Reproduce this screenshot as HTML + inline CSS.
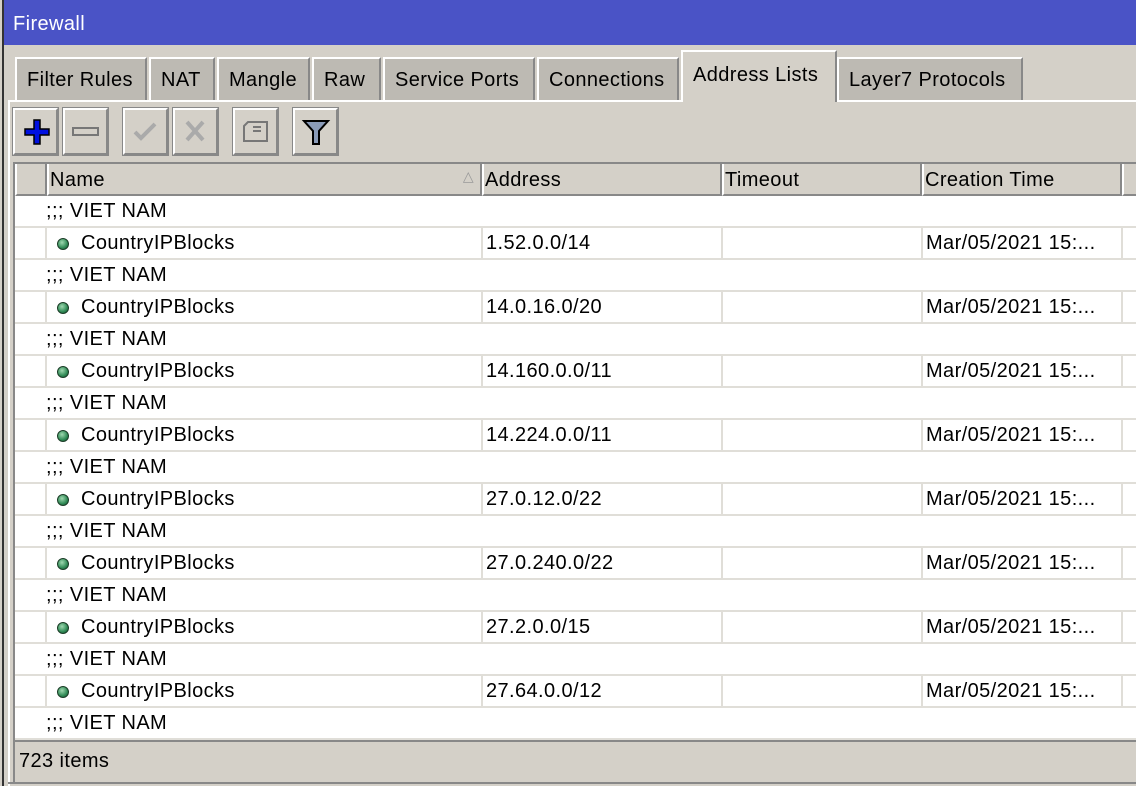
<!DOCTYPE html>
<html><head><style>
*{margin:0;padding:0;box-sizing:border-box}
body{width:1136px;height:786px;overflow:hidden;background:#d4d0c8;font-family:"Liberation Sans","DejaVu Sans",sans-serif;font-size:20px;color:#000;position:relative;letter-spacing:0.4px}
.abs{position:absolute}
.title{left:4px;top:0;width:1132px;height:45px;background:#4a53c6;color:#fff;padding:13px 0 0 9px;font-size:20px}
.lb{left:0;top:0;width:4px;height:786px;background:#d4d0c8;border-right:2px solid #333}
.tab{top:57px;height:43px;background:#bdbab3;border-top:2px solid #fff;border-left:2px solid #fff;border-right:2px solid #888;padding:10px 0 0 10px;white-space:nowrap}
.tab.act{top:50px;height:52px;background:#d4d0c8;padding-top:12px}
.btn{top:108px;width:45px;height:47px;border:2px solid #fff;border-right-color:#888;border-bottom-color:#888;outline:1px solid #888;background:#d4d0c8}
.grid{left:13px;top:162px;width:1123px;height:578px;background:#fff;border-left:2px solid #888;border-top:2px solid #888}
.hdr{position:absolute;top:0;height:32px;background:#d4d0c8;border-left:2px solid #fff;border-right:2px solid #888;border-bottom:2px solid #888;padding:5px 0 0 1px;white-space:nowrap}
.row{position:absolute;left:0;width:1123px;height:32px;border-bottom:2px solid #e0ded8}
.cell{position:absolute;top:0;height:30px;padding:4px 0 0 3px;border-left:2px solid #e0ded8;white-space:nowrap}
.dot{position:absolute;left:42px;top:10px;width:12px;height:12px;border-radius:50%;background:radial-gradient(circle at 40% 35%,#9fd8b0,#2f8a55 60%,#155030);border:1px solid #1c3d28}
.status{left:13px;top:740px;width:1123px;height:42px;border-top:2px solid #888;border-left:2px solid #888;padding:8px 0 0 4px}
</style></head><body>
<div class="abs lb"></div>
<div class="abs title">Firewall</div>
<div class="abs" style="left:8px;top:100px;width:1128px;height:2px;background:#fff"></div>
<div class="abs" style="left:8px;top:100px;width:2px;height:686px;background:#fff"></div>
<div class="abs tab" style="left:15px;width:132px">Filter Rules</div>
<div class="abs tab" style="left:149px;width:66px">NAT</div>
<div class="abs tab" style="left:217px;width:93px">Mangle</div>
<div class="abs tab" style="left:312px;width:69px">Raw</div>
<div class="abs tab" style="left:383px;width:152px">Service Ports</div>
<div class="abs tab" style="left:537px;width:142px">Connections</div>
<div class="abs tab act" style="left:681px;width:156px">Address Lists</div>
<div class="abs tab" style="left:837px;width:186px">Layer7 Protocols</div>

<div class="abs btn" style="left:13px"><svg width="41" height="43"><path d="M19 10h6v9h9v6h-9v9h-6v-9h-9v-6h9z" fill="#0010e0" stroke="#000" stroke-width="1.5"/></svg></div>
<div class="abs btn" style="left:63px"><svg width="41" height="43"><rect x="8" y="18" width="25" height="7" fill="#d4d0c8" stroke="#777" stroke-width="2"/></svg></div>
<div class="abs btn" style="left:123px"><svg width="41" height="43"><path d="M10 22l6 6 14-14" fill="none" stroke="#aaa" stroke-width="4"/></svg></div>
<div class="abs btn" style="left:173px"><svg width="41" height="43"><path d="M12 12l16 18M28 12l-16 18" fill="none" stroke="#aaa" stroke-width="4"/></svg></div>
<div class="abs btn" style="left:233px"><svg width="41" height="43"><path d="M9 16l4-4h19v19h-23z" fill="#d4d0c8" stroke="#777" stroke-width="2"/><path d="M18 17h8M18 21h8" stroke="#777" stroke-width="2"/></svg></div>
<div class="abs btn" style="left:293px"><svg width="41" height="43"><path d="M9 11h24l-9 10v13h-6v-13z" fill="#8a9bb8" stroke="#000" stroke-width="2"/></svg></div>

<div class="abs grid">
<div class="hdr" style="left:0;width:32px"></div>
<div class="hdr" style="left:32px;width:435px">Name<span style="position:absolute;right:6px;top:4px;color:#999;font-size:14px">△</span></div>
<div class="hdr" style="left:467px;width:240px">Address</div>
<div class="hdr" style="left:707px;width:200px">Timeout</div>
<div class="hdr" style="left:907px;width:200px">Creation Time</div>
<div class="hdr" style="left:1107px;width:30px"></div>
<div id="rows"></div>
</div>
<div class="abs status">723 items</div>
<div class="abs" style="left:8px;top:782px;width:1128px;height:2px;background:#888"></div>
<script>
var ips=["1.52.0.0/14","14.0.16.0/20","14.160.0.0/11","14.224.0.0/11","27.0.12.0/22","27.0.240.0/22","27.2.0.0/15","27.64.0.0/12"];
var h="",y=32;
for(var i=0;i<=8;i++){
h+='<div class="row" style="top:'+y+'px"><div style="position:absolute;left:31px;top:4px">;;; VIET NAM</div></div>';y+=32;
if(i<8){h+='<div class="row" style="top:'+y+'px"><div class="cell" style="left:30px;width:437px"></div><div class="dot"></div><div style="position:absolute;left:66px;top:4px">CountryIPBlocks</div><div class="cell" style="left:466px;width:240px">'+ips[i]+'</div><div class="cell" style="left:706px;width:200px"></div><div class="cell" style="left:906px;width:200px">Mar/05/2021 15:...</div><div class="cell" style="left:1106px;width:20px"></div></div>';y+=32;}
}
document.getElementById("rows").innerHTML=h;
</script>
</body></html>
